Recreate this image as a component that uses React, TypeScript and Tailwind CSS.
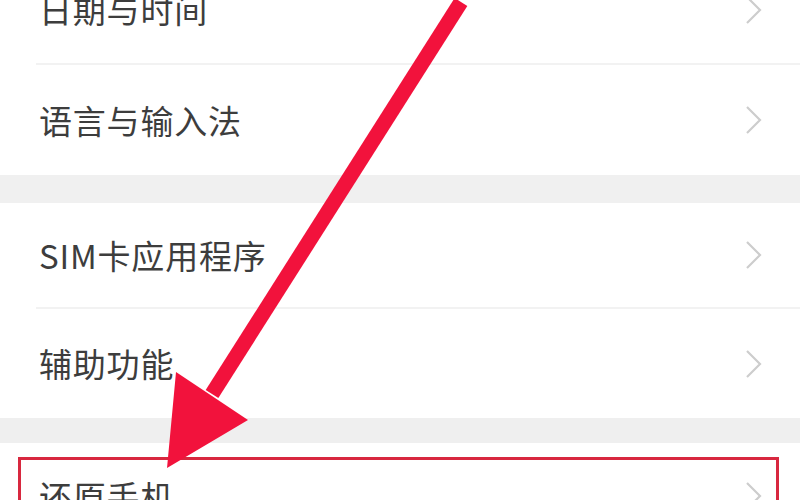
import React from "react";

const Chevron = () => (
  <svg width="20" height="32" viewBox="0 0 20 32" className="shrink-0">
    <polyline points="3,3 16,16 3,29" fill="none" stroke="#cdcdcd" strokeWidth="2.2" strokeLinejoin="miter" />
  </svg>
);

const Row = ({ label, h }: { label: string; h: string }) => (
  <div className={`flex items-center justify-between pl-[39px] pr-[36px] bg-white ${h}`}>
    <span className="text-[33px] leading-none text-[#3d3d3d] tracking-[0.8px]">{label}</span>
    <Chevron />
  </div>
);

const Divider = () => (
  <div className="h-[2px] ml-[36px] bg-[#f2f2f2]" />
);

export default function App() {
  return (
    <div
      className="relative w-[800px] h-[500px] overflow-hidden bg-white"
      style={{ fontFamily: '"Noto Sans CJK SC", "Noto Sans", sans-serif' }}
    >
      <div className="-mt-[44px] flex flex-col">
        <Row label="日期与时间" h="h-[107px]" />
        <Divider />
        <Row label="语言与输入法" h="h-[110px]" />
        <div className="h-[28px] bg-[#f0f0f0]" />
        <Row label="SIM卡应用程序" h="h-[104px]" />
        <Divider />
        <Row label="辅助功能" h="h-[109px]" />
        <div className="h-[25px] bg-[#efefef]" />
        <Row label="还原手机" h="h-[106px]" />
      </div>

      <div className="absolute left-[18px] top-[457px] w-[761px] h-[80px] border-[3px] border-[#d8283f]" />

      <svg className="absolute left-0 top-0" width="800" height="500" viewBox="0 0 800 500">
        <line x1="461" y1="2" x2="212" y2="394" stroke="#f2123c" strokeWidth="15" strokeLinecap="butt" />
        <polygon points="176,372 248,420 167,468" fill="#f2123c" />
      </svg>
    </div>
  );
}
